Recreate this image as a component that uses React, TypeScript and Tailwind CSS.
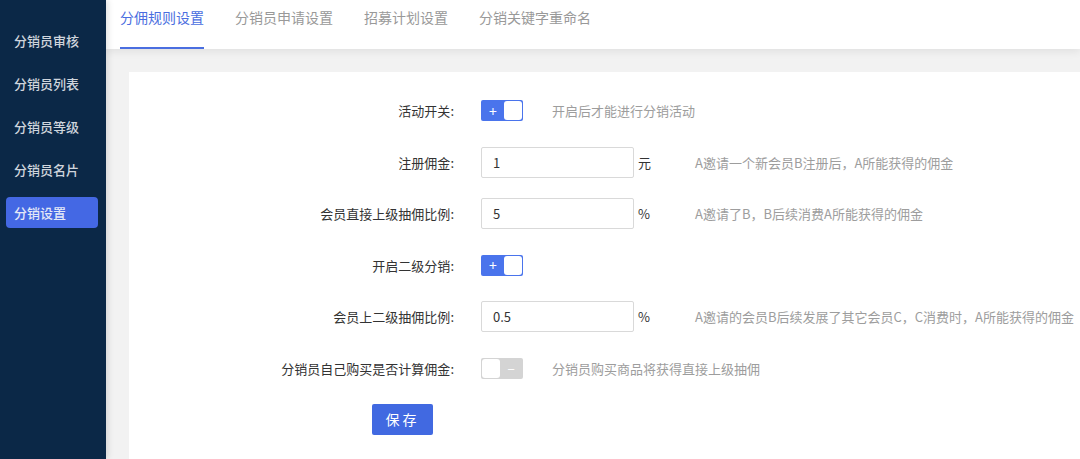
const menu = ["分销员审核", "分销员列表", "分销员等级", "分销员名片", "分销设置"];
const tabs = ["分佣规则设置", "分销员申请设置", "招募计划设置", "分销关键字重命名"];

const Switch = ({ on }: { on: boolean }) =>
  on ? (
    <div className="flex h-[21px] w-[42px] items-center rounded-[2px] bg-[#4a74ec] p-[1px]">
      <span className="flex-1 text-center text-[14px] leading-none text-white">+</span>
      <span className="h-[19px] w-[18px] rounded-[3px] bg-white" />
    </div>
  ) : (
    <div className="flex h-[21px] w-[42px] items-center rounded-[2px] bg-[#d4d4d4] p-[1px]">
      <span className="h-[19px] w-[18px] rounded-[3px] bg-white" />
      <span className="flex-1 text-center text-[13px] leading-none text-white">−</span>
    </div>
  );

const Row = ({ label, children }: { label: string; children: React.ReactNode }) => (
  <div className="flex h-[51.5px] items-center">
    <div className="w-[326px] pr-[1px] text-right text-[13px] text-[#333]">{label}:</div>
    <div className="ml-[26px] flex items-center">{children}</div>
  </div>
);

const Input = ({ value, unit }: { value: string; unit: string }) => (
  <>
    <div className="flex h-[31px] w-[153px] items-center rounded-[2px] border border-[#d9d9d9] bg-white px-[11px] text-[13px] text-[#333]">
      {value}
    </div>
    <span className="ml-[4px] w-[57px] text-[13px] text-[#333]">{unit}</span>
  </>
);

const Hint = ({ text, ml }: { text: string; ml: string }) => (
  <span className={`text-[13px] text-[#9d9d9d] ${ml}`}>{text}</span>
);

export default function App() {
  return (
    <div className="flex h-[459px] w-[1080px] overflow-hidden bg-[#f2f2f2] font-['Noto_Sans_CJK_SC',sans-serif]">
      {/* Sidebar */}
      <aside className="relative z-10 w-[106px] shrink-0 bg-[#0b2847] px-[6px] pt-[25px] shadow-[2px_0_6px_rgba(0,0,0,0.12)]">
        {menu.map((m, i) => (
          <div
            key={m}
            className={`mb-[12px] flex h-[31px] w-[92px] items-center rounded-[4px] px-[8px] text-[13px] font-medium ${
              i === 4 ? "bg-[#4468e4] text-[#e4e9f7]" : "text-[#cfd5dd]"
            }`}
          >
            {m}
          </div>
        ))}
      </aside>

      <div className="flex min-w-0 flex-1 flex-col">
        {/* Tabs */}
        <div className="relative z-[5] flex h-[49px] shrink-0 gap-[31px] bg-white pl-[14px] shadow-[0_3px_8px_rgba(0,0,0,0.07)]">
          {tabs.map((t, i) => (
            <div
              key={t}
              className={`flex h-full flex-col justify-between pt-[7px] text-[14px] leading-[20px] ${
                i === 0 ? "text-[#4a6ee0]" : "text-[#999]"
              }`}
            >
              <span>{t}</span>
              <span className={`h-[2px] w-full ${i === 0 ? "bg-[#4a6ee0]" : "bg-transparent"}`} />
            </div>
          ))}
        </div>

        {/* Content */}
        <div className="flex flex-1 pl-[23px] pt-[23px]">
          <div className="flex-1 bg-white pt-[13px]">
            <Row label="活动开关">
              <Switch on />
              <Hint text="开启后才能进行分销活动" ml="ml-[29px]" />
            </Row>
            <Row label="注册佣金">
              <Input value="1" unit="元" />
              <Hint text="A邀请一个新会员B注册后，A所能获得的佣金" ml="" />
            </Row>
            <Row label="会员直接上级抽佣比例">
              <Input value="5" unit="%" />
              <Hint text="A邀请了B，B后续消费A所能获得的佣金" ml="" />
            </Row>
            <Row label="开启二级分销">
              <Switch on />
            </Row>
            <Row label="会员上二级抽佣比例">
              <Input value="0.5" unit="%" />
              <Hint text="A邀请的会员B后续发展了其它会员C，C消费时，A所能获得的佣金" ml="" />
            </Row>
            <Row label="分销员自己购买是否计算佣金">
              <Switch on={false} />
              <Hint text="分销员购买商品将获得直接上级抽佣" ml="ml-[29px]" />
            </Row>
            <div className="flex h-[51.5px] items-center pl-[243px]">
              <button className="h-[31px] w-[61px] rounded-[2px] bg-[#4169e1] text-[14px] tracking-[3px] text-white">
                保存
              </button>
            </div>
          </div>
        </div>
      </div>
    </div>
  );
}
